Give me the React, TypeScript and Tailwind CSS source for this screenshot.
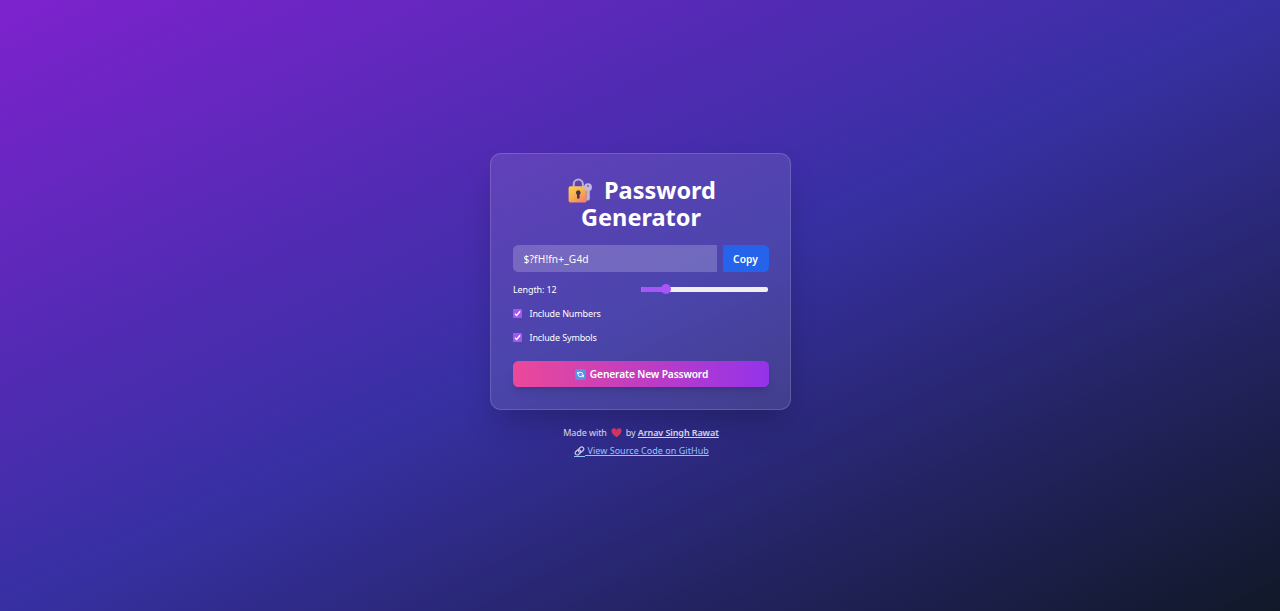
import { useState } from "react";

function LockIcon() {
  return (
    <svg viewBox="0 0 26 26" className="h-[26px] w-[26px] shrink-0" aria-hidden="true">
      <defs>
        <linearGradient id="lockBody" x1="0" y1="0" x2="0.7" y2="1">
          <stop offset="0" stopColor="#ffd152" />
          <stop offset="0.5" stopColor="#f9b450" />
          <stop offset="1" stopColor="#f5836a" />
        </linearGradient>
      </defs>
      <path d="M6.7 10V6.2a4.6 4.6 0 0 1 9.2 0V10" fill="none" stroke="#b9aed3" strokeWidth="2" />
      <rect x="1.6" y="8.2" width="18.2" height="16.2" rx="2" fill="url(#lockBody)" />
      <circle cx="21" cy="9.2" r="3.9" fill="#c4b8dc" />
      <path d="M19.4 12.3h3.4v8.6l-1.7 2-1.7-1.6z" fill="#bfb2dc" />
      <path d="M18.6 12.4h1v9h-1z" fill="#c98f6a" />
      <circle cx="21" cy="7.9" r="0.9" fill="#6848b0" />
      <path d="M11.3 12.3a2.4 2.4 0 0 1 1.3 4.4v2.8a1.3 1.3 0 0 1-2.6 0v-2.8a2.4 2.4 0 0 1 1.3-4.4z" fill="#493445" />
    </svg>
  );
}

function RefreshIcon() {
  return (
    <svg viewBox="0 0 11 11" className="h-[11px] w-[11px] shrink-0" aria-hidden="true">
      <rect x="0.3" y="0.3" width="10.4" height="10.4" rx="1" fill="#5795e8" />
      <path d="M3.1 5.3V4.4Q3.1 3.4 4.2 3.4h1.6q1.6 0 2 1.5M7.9 5.7v.9q0 1-1.1 1H5.2q-1.6 0-2-1.5" fill="none" stroke="#fff" strokeWidth="1" />
      <path d="M2.2 2.6v2.7h2.7zM8.8 8.4V5.7H6.1z" fill="#fff" />
    </svg>
  );
}

function HeartIcon() {
  return (
    <svg viewBox="0 0 12 11" className="h-[10px] w-[11px] shrink-0" aria-hidden="true">
      <path d="M6 10.2C2.6 7.8.6 5.8.6 3.5a2.7 2.7 0 0 1 5.4-.8 2.7 2.7 0 0 1 5.4.8C11.4 5.8 9.4 7.8 6 10.2z" fill="#d0355f" />
    </svg>
  );
}

function LinkIcon() {
  return (
    <svg viewBox="0 0 12 12" className="h-[10px] w-[11px] shrink-0" aria-hidden="true">
      <g fill="none" stroke="#cfc7e5" strokeWidth="1.4" transform="rotate(-42 6 6)">
        <rect x="0" y="3.6" width="7" height="4.8" rx="2.4" />
        <rect x="5" y="3.6" width="7" height="4.8" rx="2.4" />
      </g>
    </svg>
  );
}

function Option({ label, checked, onToggle }: { label: string; checked: boolean; onToggle: () => void }) {
  return (
    <button
      type="button"
      role="checkbox"
      aria-checked={checked}
      onClick={onToggle}
      className="flex h-[14px] items-center gap-[7.5px] text-[9px] tracking-[-0.14px]"
    >
      <svg viewBox="0 0 9 9" className="mb-[1px] h-[9px] w-[9px]" aria-hidden="true">
        <rect width="9" height="9" rx="1" fill={checked ? "#a855f7" : "#fff"} />
        {checked && <path d="M2 4.8 3.7 6.5 7.1 2.3" fill="none" stroke="#fff" strokeWidth="1.4" />}
      </svg>
      <span>{label}</span>
    </button>
  );
}

const pick = (set: string) => set[Math.floor(Math.random() * set.length)];

export default function App() {
  const [length, setLength] = useState(12);
  const [numbers, setNumbers] = useState(true);
  const [symbols, setSymbols] = useState(true);
  const [password, setPassword] = useState("$?fH!fn+_G4d");
  const thumb = ((length - 6) / 26) * 117 - 7.5;

  const generate = () => {
    const set =
      "ABCDEFGHIJKLMNOPQRSTUVWXYZabcdefghijklmnopqrstuvwxyz" +
      (numbers ? "0123456789" : "") +
      (symbols ? "!@#$%^&*()_+?" : "");
    setPassword(Array.from({ length }, () => pick(set)).join(""));
  };

  return (
    <div className="flex min-h-screen flex-col items-center bg-[linear-gradient(to_bottom_right,#7e22ce,#3730a3,#111827)] pl-[1px] pt-[153px] font-['Noto_Sans','Open_Sans',sans-serif] text-white">
      <main className="flex h-[257px] w-[301px] flex-col rounded-[11px] border border-white/15 bg-white/10 pl-[22px] pr-[21px] pt-[23px] shadow-[0_16.67px_33.33px_-8px_rgba(0,0,0,0.25)]">
        <h1 className="flex flex-col items-center text-[23.5px] font-bold leading-[27px]">
          <span className="flex items-center gap-[11px] whitespace-nowrap pl-[1px]">
            <LockIcon />
            <span>Password</span>
          </span>
          <span>Generator</span>
        </h1>

        <div className="mt-[14.4px] flex h-[26.6px] gap-[6px]">
          <input
            readOnly
            value={password}
            aria-label="Password"
            className="min-w-0 flex-1 rounded-l-[5.33px] bg-white/20 px-[10.6px] pt-[1px] text-[10.2px] tracking-[0.12px] outline-none"
          />
          <button
            type="button"
            onClick={() => navigator.clipboard?.writeText(password)}
            className="w-[46px] rounded-r-[5.33px] bg-[#2563eb] pr-[1px] pt-[1px] text-[10.2px] font-semibold tracking-[0.08px]"
          >
            Copy
          </button>
        </div>

        <div className="mt-[10.6px] flex h-[14px] items-center justify-between pr-[1px]">
          <span className="text-[9px] tracking-[-0.12px]">Length: {length}</span>
          <div className="relative mb-[1px] h-[10px] w-[127px]">
            <div className="flex h-full items-center">
              <div className="h-[5px] w-full overflow-hidden rounded-[2px] bg-[#efefef]">
                <div className="h-full bg-[#a855f7]" style={{ width: `${thumb + 5}px` }} />
              </div>
            </div>
            <div
              className="absolute top-0 h-[10px] w-[10px] rounded-full bg-[#a855f7]"
              style={{ left: `${thumb}px` }}
            />
            <input
              type="range"
              min={6}
              max={32}
              value={length}
              aria-label="Length"
              onChange={(e) => setLength(Number(e.target.value))}
              className="absolute inset-0 h-full w-full cursor-pointer opacity-0"
            />
          </div>
        </div>

        <div className="mt-[10.4px] flex flex-col items-start gap-[10px]">
          <Option label="Include Numbers" checked={numbers} onToggle={() => setNumbers(!numbers)} />
          <Option label="Include Symbols" checked={symbols} onToggle={() => setSymbols(!symbols)} />
        </div>

        <button
          type="button"
          onClick={generate}
          className="mt-[15.6px] flex h-[26.67px] shrink-0 items-center justify-center gap-[4px] rounded-[5.33px] bg-[linear-gradient(to_right,#ec4899,#9333ea)] pl-[1px] pt-[1px] text-[10.2px] font-semibold tracking-[-0.14px] shadow-[0_6.67px_10px_-2px_rgba(0,0,0,0.1),0_2.67px_4px_-2.67px_rgba(0,0,0,0.1)]"
        >
          <RefreshIcon />
          <span>Generate New Password</span>
        </button>
      </main>

      <footer className="mt-[15.5px] flex flex-col items-center gap-[4.5px] pl-[1px] text-[9px] leading-[14px] text-white/80">
        <p className="flex items-center tracking-[-0.1px]">
          <span>Made with</span>
          <span className="mx-[4px] flex"><HeartIcon /></span>
          <span>
            by <a href="#author" className="font-semibold underline">Arnav Singh Rawat</a>
          </span>
        </p>
        <a href="#source" className="flex items-center pl-[1px] tracking-[0.03px] text-[#93c5fd]">
          <span className="flex border-b border-[#93c5fd]"><LinkIcon /></span>
          <span className="whitespace-pre underline"> View Source Code on GitHub</span>
        </a>
      </footer>
    </div>
  );
}
